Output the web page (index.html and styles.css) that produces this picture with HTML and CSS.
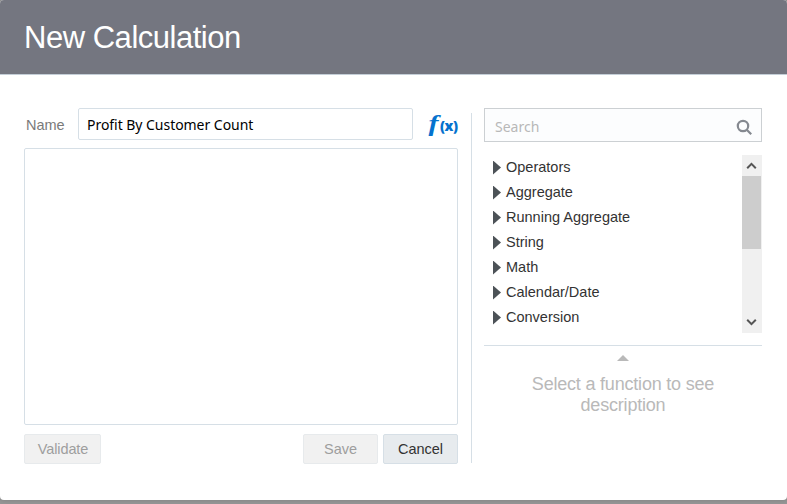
FILE: index.html
```
<!DOCTYPE html>
<html lang="en">
<head>
<meta charset="utf-8">
<title>New Calculation</title>
<link rel="stylesheet" href="styles.css">
</head>
<body>
<main class="dialog">
  <header class="header"><h1>New Calculation</h1></header>
  <div class="content">
    <section class="editor">
      <div class="name-row">
        <label class="name-label" for="name">Name</label>
        <input class="name-input" id="name" type="text" value="Profit By Customer Count">
        <div class="fx"><span class="fx-f">f</span><span class="fx-x">(x)</span></div>
      </div>
      <div class="expression"></div>
      <div class="actions">
        <button class="btn validate" disabled>Validate</button>
        <button class="btn save" disabled>Save</button>
        <button class="btn cancel">Cancel</button>
      </div>
    </section>
    <div class="divider"></div>
    <aside class="functions">
      <div class="search">
        <span>Search</span>
        <svg width="18" height="18" viewBox="0 0 18 18"><circle cx="8" cy="8" r="5.2" /><path d="M11.7 11.7L16.2 16.2"/></svg>
      </div>
      <div class="list-wrap">
        <ul class="list">
          <li><i></i><span>Operators</span></li>
          <li><i></i><span>Aggregate</span></li>
          <li><i></i><span>Running Aggregate</span></li>
          <li><i></i><span>String</span></li>
          <li><i></i><span>Math</span></li>
          <li><i></i><span>Calendar/Date</span></li>
          <li><i></i><span>Conversion</span></li>
        </ul>
        <div class="scrollbar">
          <svg width="20" height="21" viewBox="0 0 20 21"><path d="M5.2 13.2L9.5 8.9L13.8 13.2"/></svg>
          <div class="thumb"></div>
          <svg width="20" height="21" viewBox="0 0 20 21"><path d="M5.2 7.8L9.5 12.1L13.8 7.8"/></svg>
        </div>
      </div>
      <div class="description">
        <i class="collapse"></i>
        <p>Select a function to see<br>description</p>
      </div>
    </aside>
  </div>
</main>
</body>
</html>
```
FILE: styles.css
```
* { box-sizing: border-box; }
body {
  margin: 0;
  height: 504px;
  overflow: hidden;
  background: #959595;
  font: 15px/18px "Liberation Sans", Arial, sans-serif;
  color: #333;
}
.dialog {
  height: 500px;
  background: #fff;
  border-radius: 4px;
  overflow: hidden;
  box-shadow: 0 0 4px rgba(0, 0, 0, .15);
}
.header {
  height: 75px;
  padding: 20px 24px 0;
  background: #747680;
  border-bottom: 1px solid #c4ced7;
}
h1 {
  margin: 0;
  font-size: 31px;
  line-height: 36px;
  font-weight: 400;
  letter-spacing: -.48px;
  color: #fff;
}
.content {
  display: flex;
  padding: 33px 25px 0 24px;
}
.editor { width: 434px; }
.name-row {
  display: flex;
  align-items: center;
  height: 32px;
}
.name-label {
  width: 54px;
  padding: 2px 0 0 2px;
  color: #7a7a7a;
  font-size: 14.5px;
}
.name-input {
  width: 335px;
  height: 32px;
  padding: 0 8px;
  border: 1px solid #d6dfe6;
  border-radius: 2px;
  outline: 0;
  background: #fff;
  color: #000;
  font: 14px "Noto Sans", sans-serif;
  letter-spacing: -.04px;
}
.fx {
  display: flex;
  align-items: baseline;
  margin: 2px 0 0 17px;
  color: #0572ce;
}
.fx-f {
  width: 10px;
  font: italic 700 23px/24px "Liberation Serif", serif;
  transform: scaleX(1.3);
}
.fx-x { font: 800 14px/24px "Open Sans", sans-serif; letter-spacing: -.4px; }
.expression {
  height: 277px;
  margin-top: 8px;
  border: 1px solid #d6dfe6;
  border-radius: 2px;
}
.actions {
  display: flex;
  gap: 5px;
  margin-top: 9px;
}
.btn {
  width: 75px;
  height: 30px;
  padding: 0;
  border: 1px solid #e7eaec;
  border-radius: 2px;
  background: #f1f1f1;
  color: #9e9e9e;
  font: 14.5px "Liberation Sans", Arial, sans-serif;
}
.validate { width: 77px; margin-right: auto; padding-left: 1px; letter-spacing: -.1px; }
.cancel { background: #e7ebee; border-color: #d6dfe6; color: #333; }
.divider {
  width: 1px;
  height: 350px;
  margin: 5px 12px 0 13px;
  background: #d6dfe6;
}
.functions { width: 278px; }
.search {
  display: flex;
  align-items: center;
  justify-content: space-between;
  height: 34px;
  padding: 3px 8px 0 10px;
  border: 1px solid #ccd0d3;
  background: #fcfdfe;
  color: #b8b8b8;
  font: 14px "Noto Sans", sans-serif;
}
.search svg { fill: none; stroke: #858990; stroke-width: 2.2; }
.list-wrap {
  display: flex;
  justify-content: space-between;
  height: 178px;
  margin-top: 13px;
}
.list { margin: 0; padding: 0 0 0 9px; list-style: none; }
.list li {
  display: flex;
  align-items: center;
  height: 25px;
  font-size: 14.5px;
}
.list span { padding-bottom: 2px; }
.list i {
  width: 8px;
  height: 14px;
  margin-right: 5px;
  background: #4c5257;
  clip-path: polygon(0 0, 100% 50%, 0 100%);
}
.scrollbar {
  display: flex;
  flex-direction: column;
  width: 20px;
  background: #f0f0f0;
}
.scrollbar svg { fill: none; stroke: #555; stroke-width: 2; }
.thumb { width: 19px; height: 73px; margin-bottom: auto; background: #cdcdcd; }
.description {
  margin-top: 12px;
  padding-top: 9px;
  border-top: 1px solid #d6dfe6;
  text-align: center;
  color: #b9b9b9;
}
.collapse {
  display: block;
  width: 12px;
  height: 6px;
  margin: 0 auto;
  background: #b9b9b9;
  clip-path: polygon(0 100%, 50% 0, 100% 100%);
}
.description p { margin: 13px 0 0; font-size: 18px; line-height: 21px; letter-spacing: -.2px; }
```
